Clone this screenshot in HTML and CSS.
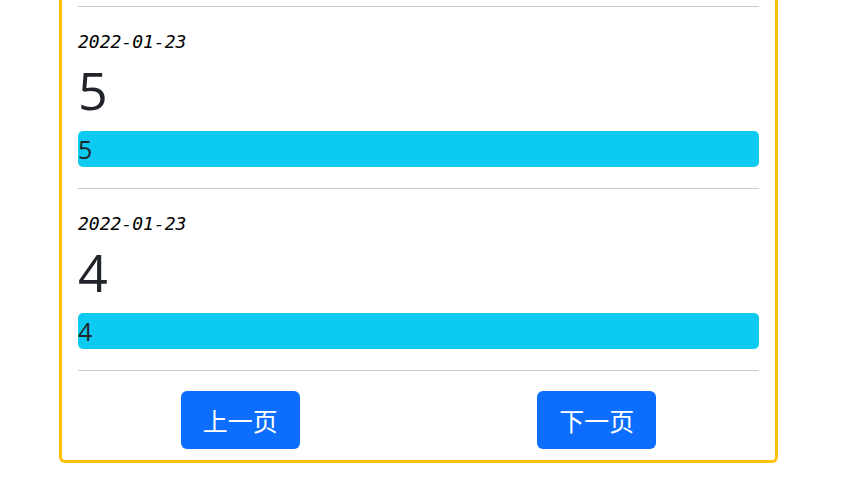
FILE: index.html
```html
<!DOCTYPE html>
<html lang="zh">
<head>
<meta charset="utf-8">
<title>记录</title>
<link rel="stylesheet" href="styles.css">
</head>
<body>
<div class="card">
  <div class="list">
    <div class="entry">
      <div class="date">2022-01-23</div>
      <div class="value">5</div>
      <div class="bar">5</div>
    </div>
    <div class="entry">
      <div class="date">2022-01-23</div>
      <div class="value">4</div>
      <div class="bar">4</div>
    </div>
  </div>
  <div class="pager">
    <button class="btn" type="button">上一页</button>
    <button class="btn" type="button">下一页</button>
  </div>
</div>
</body>
</html>
```
FILE: styles.css
```css
html, body {
  margin: 0;
  padding: 0;
  background: #fff;
}
body {
  font-family: "Open Sans", "Noto Sans CJK SC", sans-serif;
  color: #212529;
}
.card {
  box-sizing: border-box;
  width: 719px;
  margin-left: 59px;
  padding-top: 6px;
  border: 3px solid #ffc107;
  border-top: 0;
  border-radius: 0 0 6px 6px;
}
.list {
  padding: 0 16px;
}
.entry {
  border-top: 1px solid #c8c9ca;
  padding: 21px 0 21px;
}
.date {
  font-family: "DejaVu Sans Mono", monospace;
  font-style: italic;
  font-size: 18px;
  line-height: 27px;
  color: #000;
}
.value {
  margin-top: 4px;
  font-family: "Open Sans", sans-serif;
  font-weight: 400;
  font-size: 52px;
  line-height: 62px;
}
.bar {
  margin-top: 10px;
  height: 36px;
  background: #0dcaf0;
  border-radius: 5px;
  font-family: "Open Sans", sans-serif;
  font-size: 25px;
  line-height: 36px;
  color: #212529;
}
.pager {
  position: relative;
  display: flex;
  justify-content: space-around;
  padding: 21px 0 11px;
}
.pager::before {
  content: "";
  position: absolute;
  top: 0;
  left: 16px;
  right: 16px;
  border-top: 1px solid #c8c9ca;
}
.btn {
  width: 119px;
  height: 58px;
  border: 0;
  border-radius: 6px;
  background: #0d6efd;
  color: #fff;
  font-family: "Noto Sans CJK SC", sans-serif;
  font-size: 25px;
  padding: 0;
  cursor: pointer;
}
```
